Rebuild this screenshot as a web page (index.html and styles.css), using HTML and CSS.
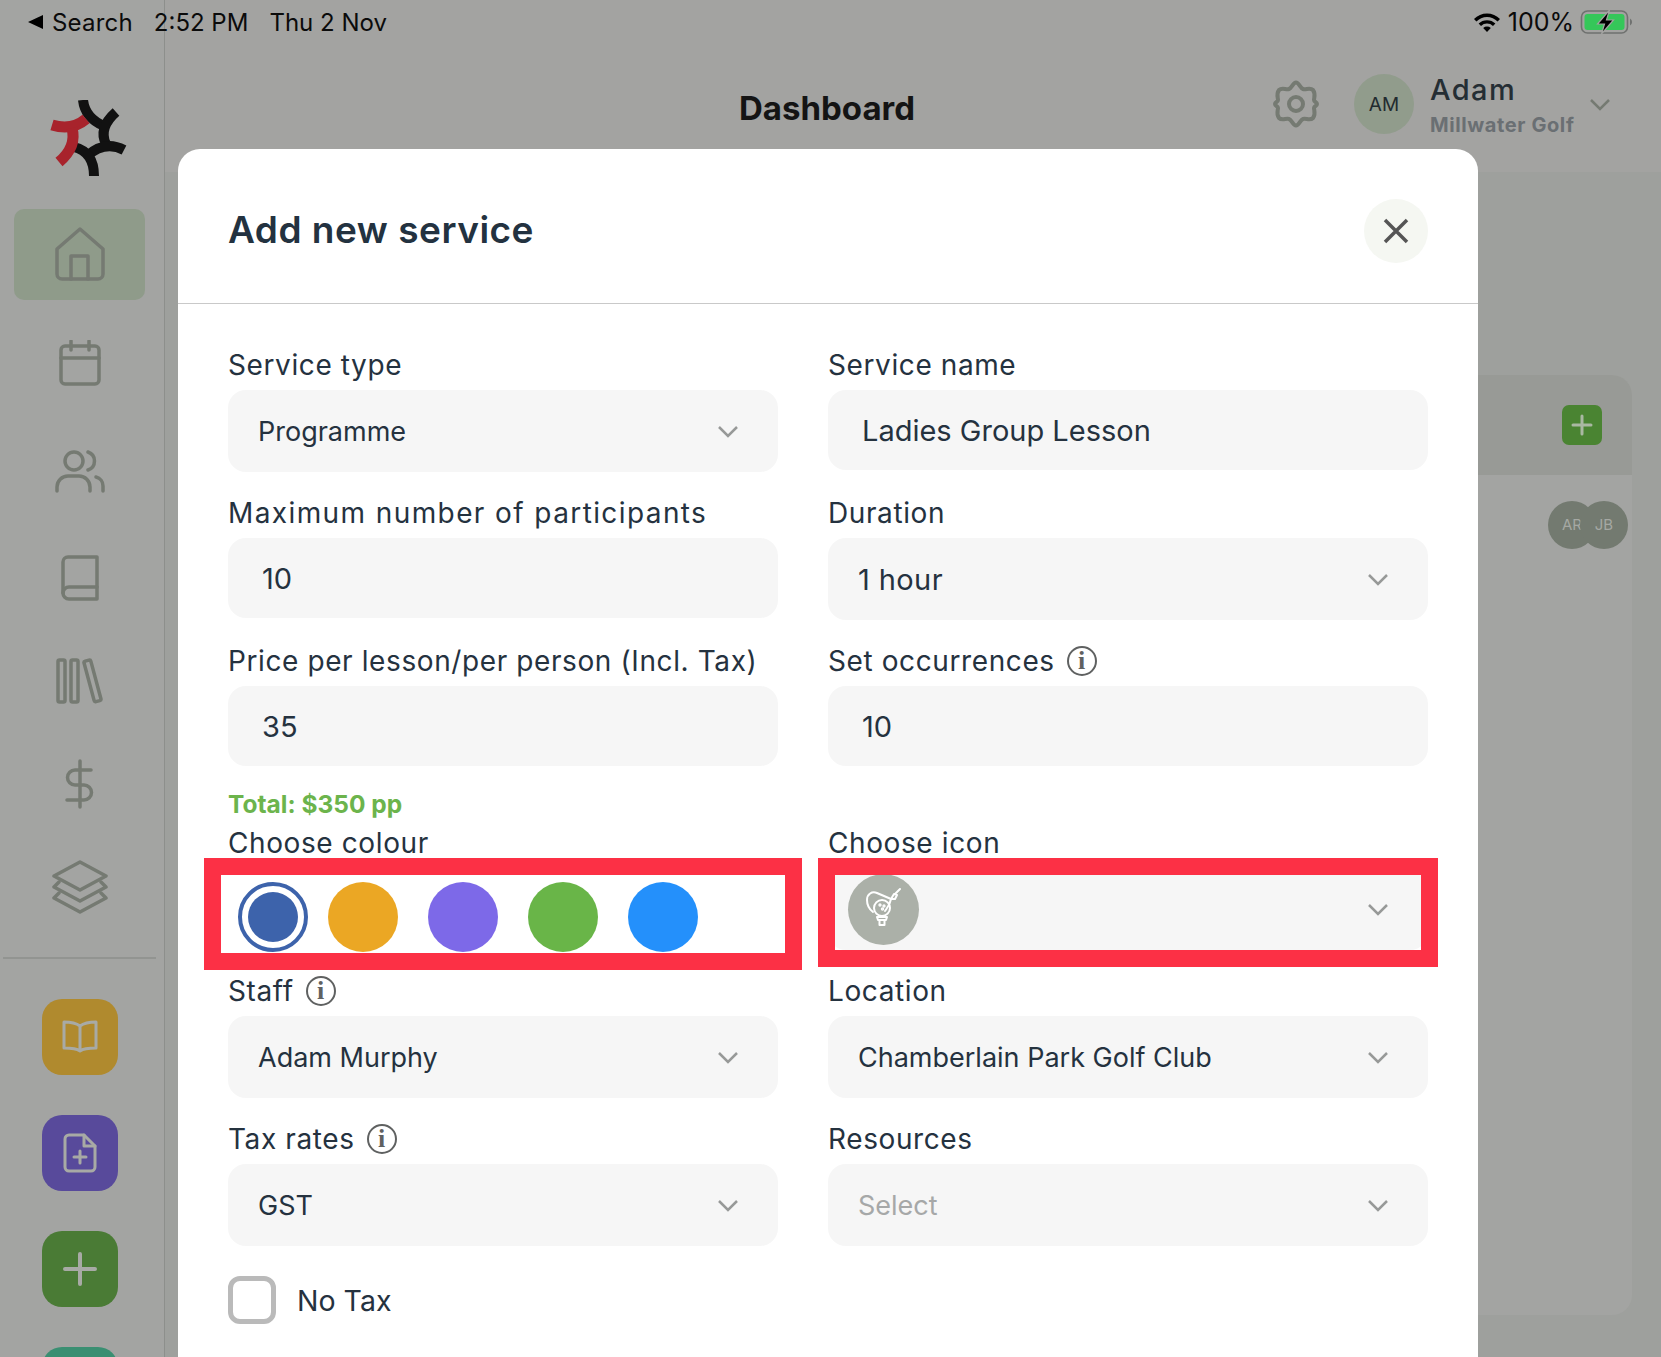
FILE: index.html
```html
<!DOCTYPE html>
<html>
  <head>
    <meta charset="UTF-8">
    <title>Add new service</title>
    <link rel="stylesheet" href="styles.css">
  </head>
  <body>
    <div class="app">
      <div class="status-bar">
        <span class="back-arrow"></span>
        <span class="status-search">Search</span>
        <span class="status-time">2:52 PM</span>
        <span class="status-date">Thu 2 Nov</span>
        <div class="status-right">
          <svg class="wifi" width="28" height="20" viewBox="0 0 28 20">
            <path d="M1 7 A18 18 0 0 1 27 7 L24.6 9.6 A14.6 14.6 0 0 0 3.4 9.6Z" fill="#000"/>
            <path d="M5.6 11.6 A12 12 0 0 1 22.4 11.6 L20 14 A8.6 8.6 0 0 0 8 14Z" fill="#000"/>
            <path d="M10.2 16 A5.6 5.6 0 0 1 17.8 16 L14 20Z" fill="#000"/>
          </svg>
          <span class="status-battery">100%</span>
          <svg class="battery" width="53" height="24" viewBox="0 0 53 24">
            <rect x="1" y="1" width="46" height="22" rx="6" fill="none" stroke="#6f716f" stroke-width="1.6"/>
            <rect x="4" y="4" width="40" height="16" rx="3" fill="#35c759"/>
            <path d="M49.500 8.500 a4 4 0 0 1 0 7Z" fill="#6f716f"/>
            <path d="M29 0 L17 14 H24 L21 24 L33 10 H26Z" fill="#000" stroke="#a3a3a1" stroke-width="1.200"/>
          </svg>
        </div>
      </div>

      <aside class="sidebar">
        <svg class="logo" width="78" height="76" viewBox="0 0 78 76" fill="none" stroke-width="10">
          <g stroke="#111">
            <path d="M33 0 Q35 18 54 26"/>
            <path d="M66 12 Q48 28 56 44"/>
            <path d="M74 50 Q55 40 37 56"/>
            <path d="M24 47 Q44 52 44 76"/>
          </g>
          <g stroke="#a8232c" stroke-width="11">
            <path d="M2 25 Q22 31 36 19"/>
            <path d="M22 28 Q27 47 9 62"/>
          </g>
        </svg>

        <nav class="side-nav">
          <a class="side-link is-active">
            <svg width="50" height="56" viewBox="0 0 50 56"><path d="M2 22 L25 2 L48 22 V47 a5 5 0 0 1 -5 5 H7 a5 5 0 0 1 -5 -5Z"/><path d="M16 52 V29 H33 V52"/></svg>
          </a>
          <a class="side-link">
            <svg width="42" height="46" viewBox="0 0 42 46"><rect x="2" y="6" width="38" height="38" rx="4"/><path d="M2 18 H40 M12 1 V10 M30 1 V10"/></svg>
          </a>
          <a class="side-link">
            <svg width="50" height="44" viewBox="0 0 50 44"><circle cx="19" cy="11" r="9"/><path d="M2 41 V37 a11 11 0 0 1 11 -11 H24 a11 11 0 0 1 11 11 V41"/><path d="M33 2 a9.500 9.500 0 0 1 0 18"/><path d="M41 27 a9 9 0 0 1 7 9 V41"/></svg>
          </a>
          <a class="side-link">
            <svg width="38" height="46" viewBox="0 0 38 46"><path d="M7 2 H36 V44 H8 a6 6 0 0 1 -6 -6 V7 a5 5 0 0 1 5 -5Z"/><path d="M2 38 a6 6 0 0 1 6 -6 H36"/></svg>
          </a>
          <a class="side-link">
            <svg width="48" height="46" viewBox="0 0 48 46"><rect x="2" y="2" width="7" height="42" rx="1.500"/><rect x="15" y="2" width="7" height="42" rx="1.500"/><rect x="33" y="2" width="7" height="42" rx="1.500" transform="rotate(-15 36 23)"/></svg>
          </a>
          <a class="side-link">
            <svg width="30" height="50" viewBox="0 0 30 50"><path d="M15 2 V48"/><path d="M26 11 H10 a7.500 7.500 0 0 0 0 15 H19 a7.500 7.500 0 0 1 0 15 H2"/></svg>
          </a>
          <a class="side-link">
            <svg width="56" height="54" viewBox="0 0 56 54"><path d="M28 2 L54 16 L28 30 L2 16Z"/><path d="M7 22 L2 27 L28 41 L54 27 L49 22"/><path d="M7 33 L2 38 L28 52 L54 38 L49 33"/></svg>
          </a>
        </nav>

        <div class="side-divider"></div>

        <div class="side-actions">
          <a class="action-btn action-yellow">
            <svg width="36" height="34" viewBox="0 0 36 34"><path d="M18 6 C14 3 8 2 2 2 V28 C8 28 14 28 18 31 C22 28 28 28 34 28 V2 C28 2 22 3 18 6Z M18 6 V31"/></svg>
          </a>
          <a class="action-btn action-purple">
            <svg width="34" height="40" viewBox="0 0 34 40"><path d="M6 2 H21 L32 13 V34 a4 4 0 0 1 -4 4 H6 a4 4 0 0 1 -4 -4 V6 a4 4 0 0 1 4 -4Z"/><path d="M21 2 V13 H32"/><path d="M17 18 V30 M11 24 H23"/></svg>
          </a>
          <a class="action-btn action-green">
            <svg width="34" height="34" viewBox="0 0 34 34"><path d="M17 2 V32 M2 17 H32" stroke-width="4"/></svg>
          </a>
          <a class="action-btn action-teal"></a>
        </div>
      </aside>

      <main class="main">
        <header class="top-bar">
          <h1 class="page-title">Dashboard</h1>
          <div class="top-user">
            <svg class="gear" width="46" height="48" viewBox="0 0 46 48" fill="none" stroke="#757a72" stroke-width="4" stroke-linejoin="round">
              <path d="M23 2.500 C26 2.500 27 8 30 9 C33 10 37 7 40 10 C43 14 41 18 41 20 C41 22 44 22 44 24 C44 26 41 26 41 28 C41 30 43 34 40 38 C37 41 33 38 30 39 C27 40 26 45.500 23 45.500 C20 45.500 19 40 16 39 C13 38 9 41 6 38 C3 34 5 30 5 28 C5 26 2 26 2 24 C2 22 5 22 5 20 C5 18 3 14 6 10 C9 7 13 10 16 9 C19 8 20 2.500 23 2.500Z"/>
              <circle cx="23" cy="24" r="7"/>
            </svg>
            <div class="avatar-main">AM</div>
            <div class="user-text">
              <div class="user-name">Adam</div>
              <div class="user-org">Millwater Golf</div>
            </div>
            <svg class="chevron-top" width="22" height="13" viewBox="0 0 22 13"><path d="M2 2 L11 11 L20 2"/></svg>
          </div>
        </header>
        <section class="content">
          <div class="card">
            <div class="card-head">
              <a class="add-btn"><svg width="22" height="22" viewBox="0 0 22 22"><path d="M11 2 V20 M2 11 H20"/></svg></a>
            </div>
            <div class="card-row">
              <span class="mini-avatar">AR</span>
              <span class="mini-avatar mini-overlap">JB</span>
            </div>
          </div>
        </section>
      </main>

      <div class="modal">
        <div class="modal-head">
          <h2 class="modal-title">Add new service</h2>
          <button class="close-btn">
            <svg width="26" height="26" viewBox="0 0 26 26"><path d="M2 2 L24 24 M24 2 L2 24"/></svg>
          </button>
        </div>

        <form class="service-form">
          <div class="field">
            <label class="field-label">Service type</label>
            <div class="select"><span>Programme</span><svg class="chevron" width="22" height="13" viewBox="0 0 22 13"><path d="M2 2 L11 11 L20 2"/></svg></div>
          </div>
          <div class="field">
            <label class="field-label">Service name</label>
            <div class="input input-wide">Ladies Group Lesson</div>
          </div>

          <div class="field">
            <label class="field-label label-wide">Maximum number of participants</label>
            <div class="input">10</div>
          </div>
          <div class="field">
            <label class="field-label">Duration</label>
            <div class="select"><span class="value-large">1 hour</span><svg class="chevron" width="22" height="13" viewBox="0 0 22 13"><path d="M2 2 L11 11 L20 2"/></svg></div>
          </div>

          <div class="field field-tight">
            <label class="field-label">Price per lesson/per person (Incl. Tax)</label>
            <div class="input">35</div>
            <div class="total">Total: $350 pp</div>
          </div>
          <div class="field field-tight">
            <label class="field-label">Set occurrences <span class="info">i</span></label>
            <div class="input input-wide">10</div>
          </div>

          <div class="field">
            <label class="field-label">Choose colour</label>
            <div class="swatches">
              <span class="swatch swatch-selected"><span class="swatch-dot"></span></span>
              <span class="swatch swatch-orange"></span>
              <span class="swatch swatch-purple"></span>
              <span class="swatch swatch-green"></span>
              <span class="swatch swatch-blue"></span>
            </div>
            <div class="mark mark-colour"></div>
          </div>
          <div class="field">
            <label class="field-label">Choose icon</label>
            <div class="select select-icon">
              <span class="icon-pick">
                <svg width="71" height="71" viewBox="0 0 71 71" fill="none" stroke="#fff" stroke-width="2" stroke-linejoin="round" stroke-linecap="round">
                  <path d="M25 38 C21 35 19 31 19 26 C19 20 24 17 29 19 L43 25 C42 31 39 34 37 37"/>
                  <circle cx="34" cy="34" r="8"/>
                  <path d="M29 43 H39 L38 46 H30Z M31.500 46 H36.500 V51 H31.500Z"/>
                  <path d="M43 25 L46 20 L49 21 L47 25 Z M47 20 L52 15"/>
                  <circle cx="32" cy="31" r="0.700"/>
                  <circle cx="36" cy="32" r="0.700"/>
                  <circle cx="34.500" cy="35" r="0.700"/>
                </svg>
              </span>
              <svg class="chevron" width="22" height="13" viewBox="0 0 22 13"><path d="M2 2 L11 11 L20 2"/></svg>
            </div>
            <div class="mark mark-icon"></div>
          </div>

          <div class="field">
            <label class="field-label">Staff <span class="info">i</span></label>
            <div class="select"><span>Adam Murphy</span><svg class="chevron" width="22" height="13" viewBox="0 0 22 13"><path d="M2 2 L11 11 L20 2"/></svg></div>
          </div>
          <div class="field">
            <label class="field-label">Location</label>
            <div class="select"><span>Chamberlain Park Golf Club</span><svg class="chevron" width="22" height="13" viewBox="0 0 22 13"><path d="M2 2 L11 11 L20 2"/></svg></div>
          </div>

          <div class="field">
            <label class="field-label">Tax rates <span class="info">i</span></label>
            <div class="select"><span>GST</span><svg class="chevron" width="22" height="13" viewBox="0 0 22 13"><path d="M2 2 L11 11 L20 2"/></svg></div>
          </div>
          <div class="field">
            <label class="field-label">Resources</label>
            <div class="select"><span class="placeholder">Select</span><svg class="chevron" width="22" height="13" viewBox="0 0 22 13"><path d="M2 2 L11 11 L20 2"/></svg></div>
          </div>

          <div class="check-row">
            <span class="checkbox"></span>
            <span class="check-label">No Tax</span>
          </div>
        </form>
      </div>
    </div>
  </body>
</html>
```

FILE: styles.css
```css
html, body {
  margin: 0;
  height: 100%;
}

body {
  font-family: Inter, "Liberation Sans", sans-serif;
  color: #25323f;
}

.app {
  position: relative;
  display: flex;
  height: 1357px;
  overflow: hidden;
  background: #9ea09d;
}

/* status bar */
.status-bar {
  position: absolute;
  top: 0;
  left: 0;
  right: 0;
  height: 44px;
  display: flex;
  align-items: center;
  padding: 0 26px 0 28px;
  font-size: 24px;
  color: #0b0b0b;
  z-index: 5;
}

.back-arrow {
  width: 0;
  height: 0;
  border-top: 7.5px solid transparent;
  border-bottom: 7.5px solid transparent;
  border-right: 15px solid #000;
  margin-right: 9px;
}

.status-search {
  letter-spacing: 0.200px;
}

.status-time {
  margin-left: 21px;
}

.status-date {
  margin-left: 21px;
}

.status-right {
  margin-left: auto;
  display: flex;
  align-items: center;
  gap: 7px;
}

.status-battery {
  font-size: 25px;
}

.battery {
  margin-left: -2px;
  width: 56px;
}

/* sidebar */
.sidebar {
  flex: none;
  width: 165px;
  box-sizing: border-box;
  border-right: 1px solid #8d8f8c;
  background: #a3a4a2;
  display: flex;
  flex-direction: column;
  align-items: center;
  padding-top: 100px;
}

.sidebar > * {
  flex: none;
}

.logo {
  margin-left: 13px;
}

.side-nav {
  display: flex;
  flex-direction: column;
  align-items: center;
  margin-top: 33px;
  margin-left: -5px;
  width: 131px;
}

.side-link {
  width: 131px;
  height: 100px;
  margin-bottom: 3px;
  display: flex;
  align-items: center;
  justify-content: center;
}

.side-link.is-active {
  height: 91px;
  margin-bottom: 13px;
  border-radius: 10px;
  background: #8f9b8a;
}

.side-link:nth-child(2) {
  margin-bottom: 9px;
}

.side-link:nth-child(3) {
  margin-bottom: 6px;
}

.side-link svg {
  fill: none;
  stroke: #757a72;
  stroke-width: 3.500;
  stroke-linecap: round;
  stroke-linejoin: round;
}

.side-divider {
  width: 153px;
  height: 2px;
  margin-left: -5px;
  margin-top: 17px;
  background: #929491;
}

.side-actions {
  display: flex;
  flex-direction: column;
  gap: 40px;
  margin-top: 40px;
  margin-left: -4px;
}

.action-btn {
  width: 76px;
  height: 76px;
  border-radius: 20px;
  display: flex;
  align-items: center;
  justify-content: center;
}

.action-btn svg {
  fill: none;
  stroke: #a8aaa5;
  stroke-width: 3;
  stroke-linecap: round;
  stroke-linejoin: round;
}

.action-yellow { background: #b08a2e; }
.action-purple { background: #584a9b; }
.action-green { background: #4a7b35; }
.action-teal { background: #3a8f72; }

/* page behind the dialog */
.main {
  flex: 1;
  min-width: 0;
}

.top-bar {
  height: 172px;
  box-sizing: border-box;
  background: #a3a3a1;
  display: flex;
  align-items: flex-start;
  padding: 74px 50px 0 574px;
}

.page-title {
  margin: 0;
  font-size: 33px;
  line-height: 68px;
  font-weight: 700;
  color: #141414;
}

.top-user {
  margin-left: auto;
  display: flex;
  align-items: center;
  height: 60px;
}

.avatar-main {
  width: 60px;
  height: 60px;
  margin-left: 35px;
  border-radius: 50%;
  background: #919c8c;
  font-size: 19px;
  line-height: 62px;
  text-align: center;
  color: #222b2f;
}

.user-text {
  width: 159px;
  margin-left: 16px;
  padding-top: 2px;
}

.user-name {
  font-size: 29px;
  line-height: 36px;
  font-weight: 500;
  letter-spacing: 1.400px;
  color: #252e34;
}

.user-org {
  font-size: 20px;
  line-height: 28px;
  margin-top: 3px;
  font-weight: 700;
  letter-spacing: 0.600px;
  color: #6a6f73;
  white-space: nowrap;
}

.chevron-top path {
  fill: none;
  stroke: #757a72;
  stroke-width: 2.500;
}

.content {
  padding: 203px 29px 0 25px;
}

.card {
  height: 940px;
  border-radius: 20px;
  overflow: hidden;
  background: #a3a4a2;
}

.card-head {
  height: 100px;
  background: #989a96;
  display: flex;
  align-items: center;
  justify-content: flex-end;
  padding-right: 30px;
}

.add-btn {
  width: 40px;
  height: 40px;
  border-radius: 7px;
  background: #4a8432;
  display: flex;
  align-items: center;
  justify-content: center;
}

.add-btn path {
  fill: none;
  stroke: #a9b8a2;
  stroke-width: 3;
  stroke-linecap: round;
}

.card-row {
  display: flex;
  justify-content: flex-end;
  padding: 26px 4px 0 0;
}

.mini-avatar {
  width: 48px;
  height: 48px;
  border-radius: 50%;
  background: #737a70;
  color: #a5a8a3;
  font-size: 15px;
  line-height: 48px;
  text-align: center;
}

.mini-overlap {
  margin-left: -16px;
}

/* dialog */
.modal {
  position: absolute;
  left: 178px;
  top: 149px;
  width: 1300px;
  height: 1300px;
  border-radius: 22px 22px 0 0;
  background: #fff;
  z-index: 3;
}

.modal-head {
  height: 155px;
  box-sizing: border-box;
  display: flex;
  align-items: center;
  justify-content: space-between;
  padding: 10px 50px 0;
  border-bottom: 1px solid #c9c9c9;
}

.modal-title {
  margin: -4px 0 0;
  font-size: 37px;
  font-weight: 600;
  letter-spacing: 0.500px;
  color: #233240;
}

.close-btn {
  width: 64px;
  height: 64px;
  padding: 0;
  border: 0;
  border-radius: 50%;
  background: #f5f7f2;
  display: flex;
  align-items: center;
  justify-content: center;
}

.close-btn path {
  fill: none;
  stroke: #555;
  stroke-width: 3.500;
}

.service-form {
  display: grid;
  grid-template-columns: 550px 600px;
  column-gap: 50px;
  padding: 45px 50px 0;
}

.field {
  position: relative;
  height: 148px;
}

.field-tight {
  height: 182px;
}

.field-label {
  display: flex;
  align-items: center;
  gap: 12px;
  height: 32px;
  margin-bottom: 9px;
  font-size: 28px;
  letter-spacing: 0.600px;
  color: #25323f;
  white-space: nowrap;
}

.label-wide {
  letter-spacing: 1.400px;
}

.select,
.input {
  box-sizing: border-box;
  display: flex;
  align-items: center;
  border-radius: 18px;
  background: #f6f6f6;
  font-size: 27px;
  color: #25323f;
}

.select {
  height: 82px;
  padding: 0 39px 0 30px;
  justify-content: space-between;
}

.input {
  height: 80px;
  padding: 0 34px;
  font-size: 29px;
}

.value-large {
  font-size: 29px;
  letter-spacing: 0.400px;
}

.chevron path {
  fill: none;
  stroke: #979998;
  stroke-width: 2.500;
}

.placeholder {
  color: #a6a8a8;
}

.info {
  width: 26px;
  height: 26px;
  border: 2px solid #5f6161;
  border-radius: 50%;
  font-family: "Liberation Serif", serif;
  font-size: 26px;
  font-weight: 700;
  line-height: 26px;
  letter-spacing: 0;
  text-align: center;
  color: #5f6161;
}

.total {
  margin-top: 22px;
  font-size: 24.500px;
  line-height: 32px;
  font-weight: 700;
  color: #6cb44c;
}

.swatches {
  display: flex;
  gap: 30px;
  padding: 14px 0 0 10px;
}

.swatch {
  flex: none;
  width: 70px;
  height: 70px;
  box-sizing: border-box;
  border-radius: 50%;
  display: flex;
  align-items: center;
  justify-content: center;
}

.swatch-selected {
  border: 4px solid #3d63ab;
  margin-right: -10px;
}

.swatch-dot {
  width: 50px;
  height: 50px;
  border-radius: 50%;
  background: #3d63ab;
}

.swatch-orange { background: #eba724; }
.swatch-purple { background: #7d69e8; }
.swatch-green { background: #69b548; }
.swatch-blue { background: #2490fb; }

.select-icon {
  padding-left: 20px;
}

.icon-pick {
  width: 71px;
  height: 71px;
  border-radius: 50%;
  background: #abb0a8;
  display: flex;
}

/* red annotation boxes on the screenshot */
.mark {
  position: absolute;
  top: 31px;
  box-sizing: border-box;
  border: 17px solid #fc3045;
}

.mark-colour {
  left: -24px;
  width: 598px;
  height: 112px;
}

.mark-icon {
  left: -10px;
  width: 620px;
  height: 109px;
}

.check-row {
  display: flex;
  align-items: center;
  gap: 21px;
  grid-column: 1 / 3;
  margin-top: 5px;
}

.checkbox {
  width: 48px;
  height: 48px;
  box-sizing: border-box;
  border: 5px solid #bababa;
  border-radius: 12px;
}

.check-label {
  font-size: 28.500px;
}
```
